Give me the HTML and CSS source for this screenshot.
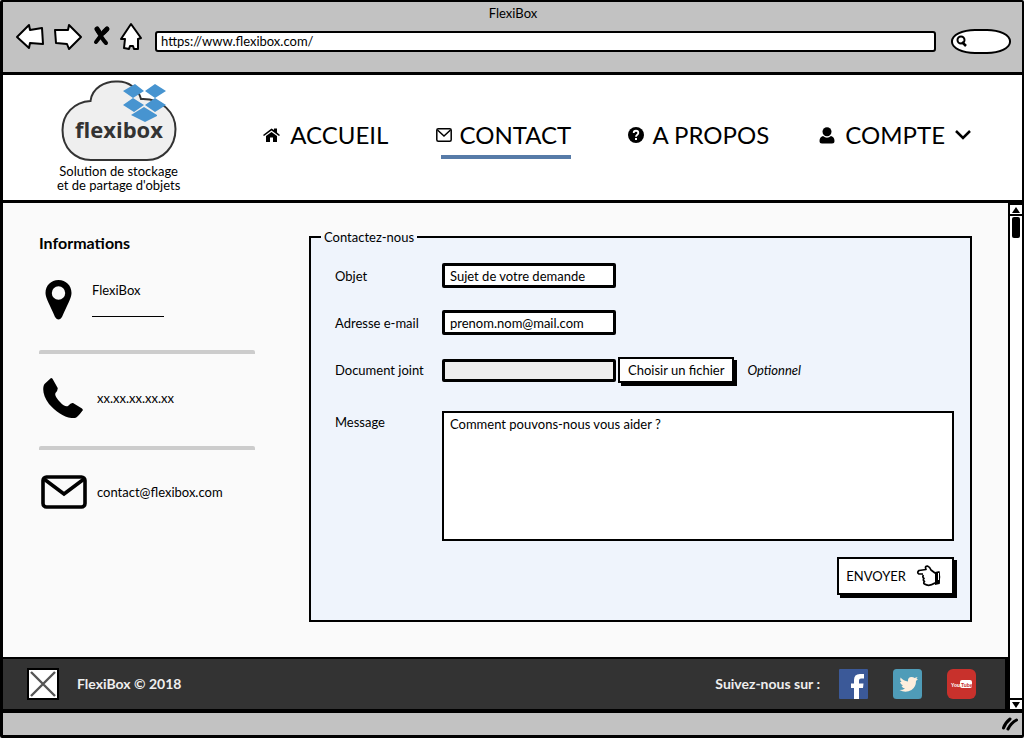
FILE: index.html
```html
<!DOCTYPE html>
<html lang="fr">
<head>
<meta charset="utf-8">
<meta name="viewport" content="width=device-width, initial-scale=1">
<title>FlexiBox</title>
<link rel="stylesheet" href="styles.css">
</head>
<body>
<div class="window">
  <div class="chrome">
    <div class="chrome-title">FlexiBox</div>
    <div class="toolbar">
      <div class="tools">
        <button class="tool" type="button" aria-label="Précédent"><svg width="30" height="28" viewBox="15 23 30 28"><path class="sketch" d="M17 37 L29 25 L30 30 L42 28 L43 44 L30 43 L29 48 Z"/></svg></button>
        <button class="tool" type="button" aria-label="Suivant"><svg width="32" height="28" viewBox="52 23 32 28"><path class="sketch" d="M54 30 L67 30 L68 25 L80 37 L68 49 L66 44 L55 43 Z"/></svg></button>
        <button class="tool" type="button" aria-label="Arrêter"><svg width="18" height="28" viewBox="93 23 18 28"><path class="cross" d="M97 29 Q102 39 106 43 M107 29 Q100 36 96 42"/><path class="cross thick" d="M97 29 L99 32 M107 29 L104 32"/></svg></button>
        <button class="tool" type="button" aria-label="Accueil"><svg width="24" height="30" viewBox="118 22 24 30"><path class="sketch" d="M130 24 L140 38 L137 39 L137 49 L133 49 L132 46 L129 46 L128 49 L123 48 L124 39 L120 39 Z"/></svg></button>
      </div>
      <input class="address" type="text" aria-label="Adresse" value="https://www.flexibox.com/">
      <label class="search">
        <svg width="14" height="14" viewBox="954 35 14 14"><circle cx="960" cy="41" r="3.5" fill="#fff" stroke="#000" stroke-width="2"/><path d="M961 43 L965 47" stroke="#000" stroke-width="2.5"/></svg>
        <input type="search" aria-label="Rechercher">
      </label>
    </div>
  </div>

  <header class="site-header">
    <a class="brand" href="#">
      <svg class="brand-logo" width="118" height="82" viewBox="60 80 118 82">
        <path d="M90.500 101 C92 88 105 81 117 81.500 C128 81 138 88 141 99 C162 98 175.500 113 175.500 129 C175.500 147 163 160 147 160 L91 160 C75 160 62.500 148 62.500 130 C62.500 114 74 102 90.500 101 Z" fill="#efefef" stroke="#333" stroke-width="2"/>
        <path fill="#4794d0" d="M135 84 L144 91 L133 98 L123 91 Z M155 84 L166 91 L155 98 L145 91 Z M133 98 L144 105 L134 112 L123 105 Z M155 98 L166 105 L155 112 L145 105 Z M144 107 L157 115 L157 116 L145 122 L131 115 Z"/>
        <text class="wordmark" x="119" y="138" text-anchor="middle">flexibox</text>
      </svg>
      <span class="tagline">Solution de stockage<br>et de partage d'objets</span>
    </a>
    <nav class="menu">
      <a class="menu-item" href="#"><svg width="17" height="14" viewBox="263 127 17 14"><path d="M263 134 L271.500 127.500 L274 129 L274 127.500 L277 127.500 L277 131.500 L280 134 L279 135 L271.500 129.500 L264 135 Z M266 135 L271.500 131 L277 135 L277 141 L273 141 L273 136.500 L270 136.500 L270 141 L266 141 Z"/></svg><span>ACCUEIL</span></a>
      <a class="menu-item mail current" href="#" aria-current="page"><svg width="16" height="14" viewBox="0 0 16 14"><rect x=".8" y=".8" width="14.400" height="12.400" rx="1.500" fill="none" stroke="#000" stroke-width="1.500"/><path d="M1.500 2 L8 8 L14.500 2" fill="none" stroke="#000" stroke-width="1.500"/></svg><span>CONTACT</span></a>
      <a class="menu-item about" href="#"><svg width="16" height="16" viewBox="0 0 16 16"><circle cx="8" cy="8" r="8"/><path d="M5.700 6 C5.700 3 10.300 3 10.300 6 C10.300 7.800 8 7.600 8 9.700" fill="none" stroke="#fff" stroke-width="1.800"/><rect x="7" y="11" width="2" height="2" fill="#fff"/></svg><span>A PROPOS</span></a>
      <a class="menu-item account" href="#"><svg width="16" height="17" viewBox="0 0 16 17"><circle cx="8" cy="4.700" r="4.500"/><path d="M4 9 Q8 12.500 12 9 Q15.500 10 15.500 14 Q15.500 16.500 13 16.500 L3 16.500 Q.5 16.500 .5 14 Q.5 10 4 9 Z"/></svg><span>COMPTE</span><svg class="chevron" width="16" height="10" viewBox="0 0 16 10"><path d="M1 1 L8 8 L15 1" fill="none" stroke="#000" stroke-width="2.500"/></svg></a>
    </nav>
  </header>

  <div class="viewport">
    <div class="page">
      <main class="content">
        <aside class="infos">
          <h1>Informations</h1>
          <div class="info place">
            <svg width="27" height="40" viewBox="0 0 27 40"><path fill-rule="evenodd" d="M13.500 0 C21 0 26.500 5.500 26.500 13 C26.500 18 22 25 17 37 Q13.500 42 10 37 C5 25 .5 18 .5 13 C.5 5.500 6 0 13.500 0 Z M13.500 6.300 A6.700 6.700 0 1 0 13.500 19.700 A6.700 6.700 0 1 0 13.500 6.300 Z"/></svg>
            <address>FlexiBox<span class="blank"></span></address>
          </div>
          <div class="info phone">
            <svg width="40" height="40" viewBox="0 0 40 40"><path d="M8 0 L1.500 6 C-1 10 0 18 6 26 C13 34 23 41 32 40 Q34 40 40 32 L39 30.500 L30 25 Q28 24.500 25 28 Q22 29.500 17 24 Q11 18 12.500 15 Q15 12 14.700 10 L9.500 .7 Q9 0 8 0 Z"/></svg>
            <span>xx.xx.xx.xx.xx</span>
          </div>
          <div class="info email">
            <svg width="46" height="34" viewBox="0 0 46 34"><rect x="2" y="2" width="42" height="30" rx="3.500" fill="none" stroke="#000" stroke-width="3.600"/><path d="M3 4 L23 19 L43 4" fill="none" stroke="#000" stroke-width="3.600"/></svg>
            <span>contact@flexibox.com</span>
          </div>
        </aside>
        <form class="contact">
          <fieldset>
            <legend>Contactez-nous</legend>
            <div class="fields">
              <label for="objet">Objet</label>
              <input class="box" id="objet" type="text" value="Sujet de votre demande">
              <label for="mail">Adresse e-mail</label>
              <input class="box" id="mail" type="text" value="prenom.nom@mail.com">
              <label for="doc">Document joint</label>
              <div class="file">
                <input class="box file-name" id="doc" type="text" readonly>
                <button class="raised" type="button">Choisir un fichier</button>
                <em>Optionnel</em>
              </div>
              <label class="message-label" for="message">Message</label>
              <textarea class="message" id="message">Comment pouvons-nous vous aider ?</textarea>
            </div>
            <button class="raised send" type="submit">ENVOYER
              <svg width="26" height="22" viewBox="0 0 26 22"><path d="M7 9 L3 9 Q.5 7.500 3 5.500 L10 4.500 Q8.500 1 11.500 1 Q14 2 15 5 L19 8 L23 8 L23 18 L19 18 Q13 22 8.500 19 Q7 18 8.500 16.500 Q6.500 15 8 13.500 Q6 12 7.500 10" fill="#fff" stroke="#000" stroke-width="1.700" stroke-linejoin="round"/><path d="M19 7 L23.500 6 Q25 12 23.500 19 L19 20 Z"/><path d="M22.500 8 L22.500 15" stroke="#fff" stroke-width="1"/></svg>
            </button>
          </fieldset>
        </form>
      </main>
      <footer class="site-footer">
        <svg width="32" height="32" viewBox="0 0 32 32"><rect x="1" y="1" width="30" height="30" fill="#fff" stroke="#000" stroke-width="2"/><path d="M4 4 L28 28 M28 4 L4 28" stroke="#555" stroke-width="2.400"/></svg>
        <strong>FlexiBox © 2018</strong>
        <div class="social">
          <strong>Suivez-nous sur :</strong>
          <a href="#" aria-label="Facebook"><svg width="29" height="30" viewBox="0 0 29 30"><rect width="29" height="30" rx="1" fill="#3b5998"/><path fill="#fff" d="M15 30 L15 19 L12 19 L12 14.500 L15 14.500 L15 11 Q15 5 21 5 L25 5 L25 9.500 L22 9.500 Q20 9.500 20 11.500 L20 14.500 L24.500 14.500 L24 19 L20 19 L20 30 Z"/></svg></a>
          <a href="#" aria-label="Twitter"><svg width="29" height="30" viewBox="0 0 29 30"><rect width="29" height="30" rx="3.500" fill="#4f9cb8"/><path fill="#fdeedd" d="M7.500 8.500 Q10.500 12 15 12.500 Q14.500 8 18.500 8 Q20.500 8 21.500 9 L24.500 8 L23.500 10 L25 10 L23 12 Q23 18 18.500 21 Q12.500 24.500 6.500 21 Q10 21 12 19.500 Q9.500 19 8.500 17 L10 16.500 Q7.500 15.500 7 13 L8.500 13 Q6.500 11 7.500 8.500 Z"/></svg></a>
          <a href="#" aria-label="YouTube"><svg width="29" height="30" viewBox="0 0 29 30"><rect width="29" height="30" rx="6" fill="#c8312c"/><rect x="13" y="11" width="12" height="8" rx="2" fill="#fff"/><text class="tube" x="4" y="17.500" fill="#fff">You</text><text class="tube" x="14" y="17.500" fill="#c8312c">Tube</text></svg></a>
        </div>
      </footer>
    </div>
    <div class="scrollbar">
      <button type="button" aria-label="Défiler vers le haut"><svg width="8" height="6" viewBox="0 0 8 6"><path d="M4 0 L8 6 L0 6 Z"/></svg></button>
      <div class="thumb"></div>
      <button type="button" aria-label="Défiler vers le bas"><svg width="8" height="6" viewBox="0 0 8 6"><path d="M0 0 L8 0 L4 6 Z"/></svg></button>
    </div>
  </div>
  <div class="status"><svg width="16" height="14" viewBox="0 0 16 14"><path d="M1.500 11 Q3 6 8 2 M6 12 Q9 6 14.500 3" fill="none" stroke="#000" stroke-width="3" stroke-linecap="round"/></svg></div>
</div>
</body>
</html>
```
FILE: styles.css
```css
* { box-sizing: border-box; }

body {
  margin: 0;
  background: #fff;
  color: #000;
  font: 13px/14px Lato, "Open Sans", sans-serif;
}

a { color: inherit; text-decoration: none; }
svg { display: block; flex: none; }
button, input, textarea { font: inherit; color: inherit; margin: 0; }
button { cursor: pointer; }

.window {
  display: flex;
  flex-direction: column;
  min-height: 100vh;
  border: 3px solid #000;
  border-top-width: 2px;
  border-right-width: 2px;
  border-radius: 2px;
}

/* Browser frame */
.chrome {
  height: 73px;
  padding: 4px 11px 0 12px;
  background: #c2c2c2;
  border-bottom: 3px solid #000;
}
.chrome-title { text-align: center; }
.toolbar { display: flex; align-items: center; height: 34px; gap: 12px; }
.tools { display: flex; align-items: center; gap: 8px; }
.tool { padding: 0; border: 0; background: none; }
.sketch { fill: #fff; stroke: #000; stroke-width: 2; stroke-linejoin: round; }
.cross { fill: none; stroke: #000; stroke-width: 4; stroke-linecap: round; }
.thick { stroke-width: 5; }
.address {
  flex: 1;
  min-width: 0;
  height: 21px;
  margin-top: 8px;
  padding: 0 4px;
  border: 2px solid #000;
  border-radius: 3px;
  background: #fff;
}
.search {
  display: flex;
  align-items: center;
  width: 60px;
  height: 25px;
  margin: 8px 0 0 3px;
  padding-left: 2px;
  border: 2px solid #000;
  border-radius: 24px / 12px;
  background: #fff;
}
.search input { width: 36px; padding: 0; border: 0; background: none; outline: 0; }

/* Site header */
.site-header {
  display: flex;
  align-items: flex-start;
  gap: 83px;
  padding: 5px 51px 8px 54px;
  border-bottom: 3px solid #000;
}
.brand { display: flex; flex-direction: column; align-items: center; gap: 2px; text-align: center; }
.wordmark { font: 700 22px "Open Sans", sans-serif; fill: #333; }
.menu { display: flex; flex: 1; justify-content: space-between; padding-top: 39px; }
.menu-item {
  display: flex;
  align-items: center;
  gap: 10px;
  padding: 4px 0 12px;
  font-size: 24px;
  line-height: 24px;
}
.mail { gap: 8px; margin: 0 7px 0 -3px; }
.about { gap: 8px; }
.current { background: linear-gradient(#577ba8, #577ba8) right bottom / calc(100% - 5px) 4px no-repeat; }

/* Scrolling area */
.viewport { display: flex; flex: 1; }
.page { display: flex; flex: 1; flex-direction: column; min-width: 0; }
.content {
  display: grid;
  flex: 1;
  grid-template-columns: 216px 1fr;
  gap: 54px;
  align-items: start;
  padding: 27px 36px 34px;
  background: #fafafa;
}

.infos h1 { margin: 5px 0 0; font-size: 16px; line-height: 16px; }
.info { display: flex; align-items: center; gap: 14px; height: 96px; padding-bottom: 2px; }
.info + .info { border-top: 4px solid #ccc; border-radius: 2px; }
.place { gap: 20px; height: 99px; padding-left: 6px; }
.phone { padding: 0 0 4px 4px; }
.email { gap: 10px; padding: 0 0 9px 2px; }
address { font-style: normal; }
.blank { display: block; width: 72px; height: 20px; border-bottom: 1px solid #000; }

.contact fieldset {
  margin: 0;
  padding: 19px 16px 25px 24px;
  border: 2px solid #000;
  background: #eff4fc;
}
.contact legend { margin-left: -14px; padding: 0 3px; }
.fields {
  display: grid;
  grid-template-columns: 84px 1fr;
  gap: 22px 23px;
  align-items: center;
  white-space: nowrap;
}
.box { width: 174px; height: 25px; padding: 0 5px; border: 3px solid #000; border-radius: 2px; background: #fff; }
.file { display: flex; align-items: center; gap: 2px; }
.file-name { height: 23px; background: #eee; }
.file em { margin-left: 11px; }
.raised {
  height: 26px;
  padding: 0 8px;
  border: 2px solid #000;
  background: #fff;
  box-shadow: 3px 3px 0 #000;
}
.message-label { align-self: start; padding-top: 10px; }
.message {
  display: block;
  width: 100%;
  height: 130px;
  margin-top: 6px;
  padding: 4px 6px;
  border: 2px solid #000;
  background: #fff;
  resize: none;
}
.send { display: flex; align-items: center; gap: 10px; height: 38px; margin: 16px 0 0 auto; padding: 0 10px 0 7px; }

/* Footer */
.site-footer {
  display: flex;
  align-items: center;
  gap: 18px;
  height: 54px;
  padding: 0 29px 0 24px;
  border: solid #000;
  border-width: 2px 3px 2px 0;
  background: #333;
  color: #eee;
  font-size: 14px;
}
.social { display: flex; align-items: center; gap: 25px; margin-left: auto; }
.social strong { margin-right: -6px; }
.tube { font: 700 5px "Liberation Sans", sans-serif; }

/* Scroll bar and status bar */
.scrollbar {
  display: flex;
  flex-direction: column;
  width: 14px;
  border-left: 2px solid #000;
  background: #fff;
}
.scrollbar button {
  display: grid;
  place-items: center;
  height: 13px;
  padding: 0;
  border: solid #000;
  border-width: 2px 0;
  background: #fff;
}
.thumb { width: 8px; height: 21px; margin: 1px 2px auto; border-radius: 2px; background: #000; }
.status {
  display: flex;
  align-items: center;
  justify-content: flex-end;
  height: 24px;
  padding-right: 4px;
  border-top: 2px solid #000;
  background: #c2c2c2;
}
```
